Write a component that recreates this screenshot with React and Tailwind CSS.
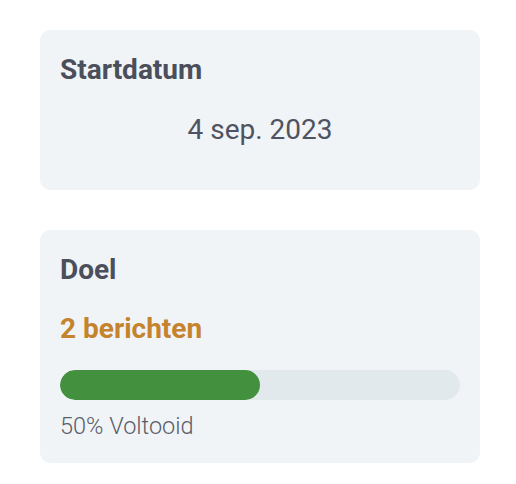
import React from "react";

const Card = ({ title, children, className = "" }) => (
  <div className={`w-[440px] rounded-[10px] bg-[#f0f4f7] px-[20px] pt-[20px] ${className}`}>
    <h2 className="text-[28px] font-bold leading-[39px] text-[#4b4e5b]">{title}</h2>
    {children}
  </div>
);

export default function App() {
  const progress = 50;

  return (
    <div
      className="flex min-h-screen flex-col gap-[40px] bg-white pl-[40px] pt-[30px]"
      style={{ fontFamily: "Roboto, 'Noto Sans', sans-serif" }}
    >
      <Card title="Startdatum" className="pb-[41px]">
        <div className="mt-[21px] text-center text-[28px] leading-[39px] text-[#4f5361]">
          4 sep. 2023
        </div>
      </Card>

      <Card title="Doel" className="pb-[21px]">
        <div className="mt-[20px] text-[28px] font-bold leading-[39px] text-[#c4832c]">
          2 berichten
        </div>
        <div className="mt-[22px] h-[30px] w-full overflow-hidden rounded-full bg-[#e1e9ec]">
          <div className="h-full rounded-full bg-[#43903f]" style={{ width: `${progress}%` }} />
        </div>
        <div className="mt-[10px] text-[23.5px] font-light leading-[32px] text-[#5a5d6a]">
          {progress}% Voltooid
        </div>
      </Card>
    </div>
  );
}
